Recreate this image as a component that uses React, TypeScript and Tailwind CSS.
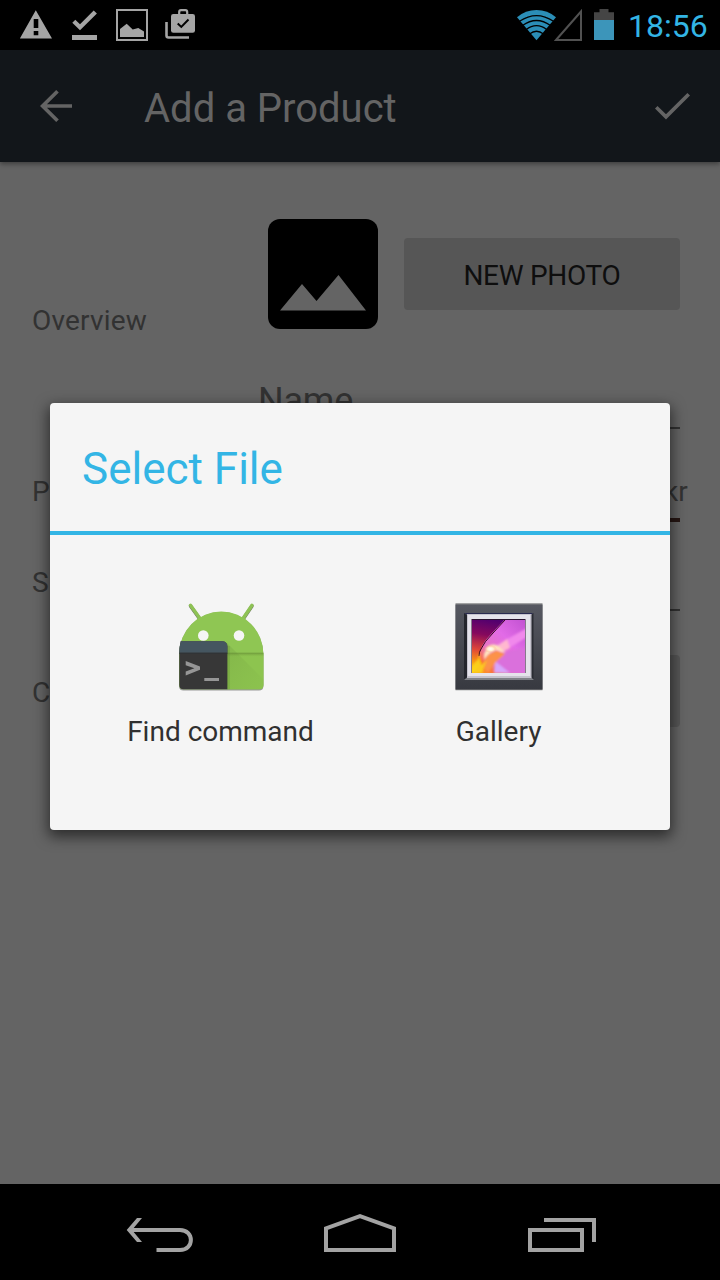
import type { ReactNode } from 'react';

function WarningIcon() {
  return (
    <svg className="h-[50px] w-[32px]" viewBox="20 0 32 50" fill="#a5a5a5">
      <path fillRule="evenodd" d="M35.8 10.3 52 38.6H19.8ZM33.7 19v9h4.6v-9ZM33.7 31v4.3h4.6V31Z" />
    </svg>
  );
}

function DownloadDoneIcon() {
  return (
    <svg className="h-[50px] w-[26px]" viewBox="72 0 26 50" fill="#a5a5a5">
      <path d="m72.3 22.8 3-3.1 4.7 4.6L93.7 10.4l3.2 3L80 30.2ZM72 35h25v5H72Z" />
    </svg>
  );
}

function ScreenshotIcon() {
  return (
    <svg className="h-[50px] w-[32px]" viewBox="116 0 32 50">
      <path d="M117 10h30v30h-30Z" fill="none" stroke="#a5a5a5" strokeWidth="2" />
      <path d="M120 37v-8l6.7-5.2 6 5.7 5.6-1.5 5.7 3.4V37Z" fill="#a5a5a5" />
    </svg>
  );
}

function BriefcaseIcon() {
  return (
    <svg className="h-[50px] w-[31px]" viewBox="165 0 31 50">
      <path d="M166.5 22v13.5q0 2 2 2H189" fill="none" stroke="#a5a5a5" strokeWidth="2.6" />
      <rect x="171" y="14" width="24" height="18.7" rx="2.3" fill="#a5a5a5" />
      <path d="M179.2 15v-3q0-1.8 1.8-1.8h4.4q1.8 0 1.8 1.8v3" fill="none" stroke="#a5a5a5" strokeWidth="2.2" />
      <path d="m177.7 23.5 3.6 3.4 7.2-7.4" fill="none" stroke="#000" strokeWidth="2" />
    </svg>
  );
}

function WifiIcon() {
  return (
    <svg className="h-[50px] w-[40px]" viewBox="517 0 40 50">
      <path d="M536.5 40.3 517 17.2Q525.5 10 536.5 10T556 17.2Z" fill="#2b8eb7" />
      <g fill="none" stroke="#000" strokeWidth="1.3">
        <path d="M519.5 21.300q17-11.500 34 0" />
        <path d="M522.500 25.500q14-10 28 0" />
        <path d="M526 29.700q10.500-8 21 0" />
        <path d="M529.500 34q7-5.500 14 0" />
      </g>
    </svg>
  );
}

function SignalIcon() {
  return (
    <svg className="h-[50px] w-[28px]" viewBox="554 0 28 50">
      <path d="M556 40 581 11.500V40Z" fill="none" stroke="#515151" strokeWidth="2" />
    </svg>
  );
}

function BatteryIcon() {
  return (
    <svg className="h-[50px] w-[20px]" viewBox="594 0 20 50">
      <path d="M594 12.300h5.500V9h9v3.300h5.500V20h-20Z" fill="#454545" />
      <path d="M594 20h20v20h-20Z" fill="#3c95ba" />
    </svg>
  );
}

function StatusBar() {
  return (
    <header className="flex h-[50px] items-center bg-black pl-5 pr-3">
      <WarningIcon />
      <div className="ml-5"><DownloadDoneIcon /></div>
      <div className="ml-[18px]"><ScreenshotIcon /></div>
      <div className="ml-[17px]"><BriefcaseIcon /></div>
      <div className="ml-auto flex items-center">
        <WifiIcon />
        <div className="-ml-[3px]"><SignalIcon /></div>
        <div className="ml-3"><BatteryIcon /></div>
        <span className="ml-[14px] w-20 whitespace-nowrap pt-px text-[32px] leading-none text-[#33b5e5]">18:56</span>
      </div>
    </header>
  );
}

function AppBar() {
  return (
    <div className="relative flex h-28 items-center bg-[#12161a] shadow-[0_2px_5px_rgba(0,0,0,0.4)]">
      <svg className="ml-10 h-28 w-8" viewBox="40 50 32 112" fill="none" stroke="#646464" strokeWidth="3.700">
        <path d="M57.500 91.200 42.600 106l14.900 14.800M42.600 106H72" />
      </svg>
      <h1 className="ml-[72px] whitespace-nowrap pt-1.5 text-[40px] leading-none text-[#646464]">Add a Product</h1>
      <svg className="ml-auto mr-[29px] h-28 w-9" viewBox="655 50 36 112" fill="none" stroke="#646464" strokeWidth="3.700">
        <path d="m656.200 107.200 9.800 9.700 22.700-22.600" />
      </svg>
    </div>
  );
}

function FormRow({ label, height, children }: { label: string; height: string; children?: ReactNode }) {
  return (
    <div className={`flex pl-8 ${height}`}>
      <div className="w-[227px] text-[28px] leading-8 text-[#323232]">{label}</div>
      {children}
    </div>
  );
}

function ProductForm() {
  return (
    <main className="h-[1022px] bg-[#646464]">
      <div className="flex h-[213px] pl-8">
        <div className="w-[236px] pt-[143px] text-[28px] leading-8 tracking-[0.200px] text-[#323232]">Overview</div>
        <svg className="mt-[57px] h-[110px] w-[110px]" viewBox="0 0 110 110">
          <rect width="110" height="110" rx="12" fill="#000" />
          <path d="M12 91.500 34 65l14.500 17L70.500 56 98 91.500Z" fill="#646464" />
        </svg>
        <button className="ml-[26px] mt-[76px] h-[72px] w-[276px] rounded bg-[#565656] pt-[3px] text-[28px] tracking-[-0.300px] text-[#0e0e0e]">
          NEW PHOTO
        </button>
      </div>
      <FormRow label="" height="h-[101px]">
        <div className="-ml-px h-[54px] w-[422px] border-b-2 border-[#323232] pt-[5px] text-[36px] leading-[42px] tracking-[-0.200px] text-[#323232]">Name</div>
      </FormRow>
      <FormRow label="P" height="h-[91px]">
        <div className="h-[46px] w-[421px] border-b-4 border-[#261613] pl-[405px] text-[28px] leading-8 text-[#323232]">kr</div>
      </FormRow>
      <FormRow label="S" height="h-[88px]">
        <div className="h-[44px] w-[421px] border-b-2 border-[#323232]" />
      </FormRow>
      <div className="flex pl-8">
        <div className="w-[236px] pt-[22px] text-[28px] leading-8 text-[#323232]">C</div>
        <div className="h-[72px] w-[412px] rounded bg-[#565656]" />
      </div>
    </main>
  );
}

function FindCommandIcon() {
  return (
    <svg className="h-[90px] w-[90px]" viewBox="176 602 90 90">
      <defs>
        <linearGradient id="cast" x1="0" y1="0" x2="1" y2="1">
          <stop offset="0" stopColor="#6d983e" stopOpacity=".8" />
          <stop offset="1" stopColor="#7ba944" stopOpacity=".15" />
        </linearGradient>
        <linearGradient id="fold" x1="0" y1="0" x2="0" y2="1">
          <stop offset="0" stopColor="#527229" stopOpacity=".55" />
          <stop offset="1" stopColor="#79a640" stopOpacity="0" />
        </linearGradient>
      </defs>
      <path d="M179 655a42.200 43 0 0 1 84.400 0v31q0 4.500-4.500 4.500h-75.400q-4.500 0-4.500-4.500Z" fill="#999" />
      <path d="m190.500 606 10 14M252 606l-9.500 14" stroke="#727b65" strokeWidth="3.500" strokeLinecap="round" />
      <path d="m190.500 605.300 10 14M252 605.300l-9.500 14" stroke="#8ec255" strokeWidth="3.400" strokeLinecap="round" />
      <path d="M179.200 654a42.100 42.500 0 0 1 84.200 0v31q0 4.200-4.200 4.200h-75.800q-4.200 0-4.200-4.200Z" fill="#8fc653" />
      <path d="M227 652.700h36.400V685q0 4.200-4.200 4.200H227Z" fill="#8dc44f" />
      <path d="m226 642 37.400 37.500v5.500q0 4.200-4.200 4.200H227Z" fill="url(#cast)" opacity=".4" />
      <path d="M227 652.700h36.400v4H227Z" fill="url(#fold)" />
      <path d="M227 646h3v43.200h-3Z" fill="#527229" opacity=".18" />
      <circle cx="203.300" cy="635.500" r="5.300" fill="#f5f5f5" />
      <circle cx="239" cy="635.500" r="5.300" fill="#f5f5f5" />
      <path d="M180.700 641.300h41.200q5.500 0 5.500 5.500v42.400h-43.900q-4.200 0-4.200-4.200v-31q0-6.500 1.400-12.700Z" fill="#373737" />
      <path d="M180.700 641.300h41.200q5.500 0 5.500 5.500v5.900h-48.100q0-6 1.400-11.400Z" fill="#455660" />
      <path d="M179.300 652.700h48.100v1h-48.100Z" fill="#303437" />
      <path d="M185.700 661v4.200l8.700 3-8.700 3.300v4l14.300-5.700v-3.200ZM204.300 678h14.700v3h-14.700Z" fill="#969696" />
    </svg>
  );
}

function GalleryIcon() {
  return (
    <svg className="h-[90px] w-[90px]" viewBox="454 602 90 90">
      <defs>
        <linearGradient id="frame" x1="0" y1="0" x2="0" y2="1">
          <stop offset="0" stopColor="#565861" />
          <stop offset="1" stopColor="#373940" />
        </linearGradient>
        <linearGradient id="petal" x1="0" y1="1" x2="1" y2="0">
          <stop offset="0" stopColor="#ffb800" />
          <stop offset=".2" stopColor="#fb743e" />
          <stop offset=".38" stopColor="#e673c4" />
          <stop offset=".65" stopColor="#e26be7" />
          <stop offset="1" stopColor="#c252d2" />
        </linearGradient>
        <linearGradient id="night" gradientUnits="userSpaceOnUse" x1="487" y1="619" x2="478" y2="671">
          <stop offset="0" stopColor="#51006f" />
          <stop offset=".3" stopColor="#86095d" />
          <stop offset=".6" stopColor="#df4638" />
          <stop offset=".8" stopColor="#f68a18" />
          <stop offset="1" stopColor="#ffd000" />
        </linearGradient>
        <radialGradient id="glow">
          <stop offset="0" stopColor="#fff" />
          <stop offset=".45" stopColor="#fff0d2" stopOpacity=".9" />
          <stop offset="1" stopColor="#ff9c78" stopOpacity="0" />
        </radialGradient>
        <clipPath id="photo"><path d="M472 620h53v53h-53Z" /></clipPath>
        <filter id="soft"><feGaussianBlur stdDeviation="1.300" /></filter>
      </defs>
      <path d="M455.500 603.300h87v86.900h-87Z" fill="#858687" />
      <path d="M455.500 604.500h87v85h-87Z" fill="url(#frame)" />
      <path d="m464 613 4 3v60l-4 3.500Z" fill="#24262d" />
      <path d="m464 613 4 2h62l3.500-2Z" fill="#292a50" />
      <path d="m533.500 613-3 3v60l3 3.500Z" fill="#2a2c33" />
      <path d="m464 680 4-3h62.500l3.500 3Z" fill="#7f8187" />
      <path d="M467 614h64.500v64H467Z" fill="#c6c4ce" />
      <path d="M468 615h62v61h-62Z" fill="#e5e3eb" />
      <path d="M471.500 619h54v54h-54Z" fill="#29132f" />
      <g clipPath="url(#photo)">
        <path d="M472 620h53v53h-53Z" fill="url(#petal)" />
        <path d="M472 619h33l-12 13q-14 14-14 24l3 7-10 10Z" fill="url(#night)" />
        <g filter="url(#soft)">
          <path d="m497 645 30-17v9l-29 18Z" fill="#f188ec" />
          <path d="m494 673 2-18 30-8v26Z" fill="#da6fdc" />
          <path d="m494 673 1-12 15 12Z" fill="#d7a6fb" />
          <path d="m483 667 4-12 10-5 8 4-9 8-8 11Z" fill="#fc9248" />
          <path d="m495 648 12-9 3 9-8 4Z" fill="#ffb8cf" />
        </g>
        <path d="m505 620-12 13q-9 9-12 16-2 3-2 7" fill="none" stroke="#35051c" strokeWidth="1" />
        <path d="m484 654 4-8q6-3 10 0l8 7-9-3q-7 1-13 10Z" fill="#ffe5bd" filter="url(#soft)" />
        <ellipse cx="490.500" cy="649" rx="6.500" ry="4" fill="url(#glow)" />
        <path d="m472 666 6-7 1-6 2 12 6-5-5 13h-10Z" fill="#fbd51b" opacity=".85" filter="url(#soft)" />
      </g>
    </svg>
  );
}

function ChooserItem({ icon, label }: { icon: ReactNode; label: string }) {
  return (
    <button className="flex w-[278px] flex-col items-center text-[28px] text-[#303030]">
      {icon}
      <span className="mt-6 pr-px leading-8">{label}</span>
    </button>
  );
}

function SelectFileDialog() {
  return (
    <section role="dialog" aria-label="Select File" className="absolute left-[50px] top-[403px] h-[427px] w-[620px] rounded bg-[#f5f5f5] shadow-[0_5px_14px_2px_rgba(0,0,0,0.55)]">
      <h2 className="h-[132px] border-b-4 border-[#33b5e5] pl-8 pt-[41px] text-[44px] leading-[50px] text-[#33b5e5]">Select File</h2>
      <div className="flex justify-center pt-[67px]">
        <ChooserItem icon={<FindCommandIcon />} label="Find command" />
        <ChooserItem icon={<GalleryIcon />} label="Gallery" />
      </div>
    </section>
  );
}

function NavigationBar() {
  return (
    <nav className="flex h-24 bg-black pl-[126px]">
      <svg className="h-24 w-[68px]" viewBox="126 1184 68 96" fill="none" stroke="#a3a3a3" strokeWidth="4">
        <path d="M129 1230h51c14.500 0 14.500 20 0 20h-23.500" />
        <path d="M137 1218h5l-10 12 10 12h-5l-10.300-12Z" fill="#a3a3a3" stroke="none" />
      </svg>
      <svg className="ml-[130px] h-24 w-[72px]" viewBox="324 1184 72 96" fill="none" stroke="#a3a3a3" strokeWidth="4">
        <path d="M326 1250v-21.700l34-12.200 34 12.200v21.700Z" />
      </svg>
      <svg className="ml-[132px] h-24 w-[68px]" viewBox="528 1184 68 96" fill="none" stroke="#a3a3a3" strokeWidth="4">
        <path d="M530 1230h52v20h-52ZM544 1220h50v22" />
      </svg>
    </nav>
  );
}

export default function App() {
  return (
    <div className="relative h-[1280px] w-[720px] overflow-hidden bg-black font-[Roboto,sans-serif]">
      <StatusBar />
      <AppBar />
      <ProductForm />
      <NavigationBar />
      <SelectFileDialog />
    </div>
  );
}
